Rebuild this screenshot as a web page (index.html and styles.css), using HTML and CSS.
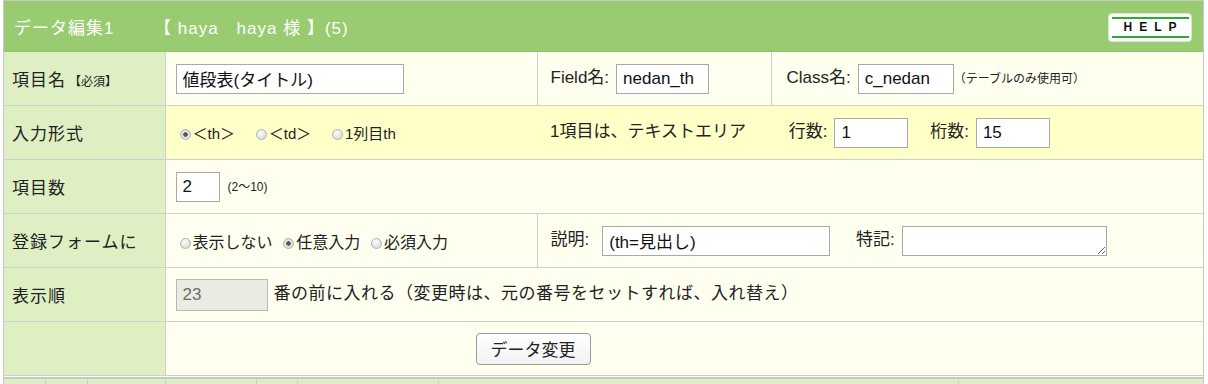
FILE: index.html
```html
<!DOCTYPE html>
<html>
  <head>
    <title>データ編集1</title>
    <link rel="stylesheet" href="styles.css">
  </head>
  <body>
    <div class="wrap">
      <div class="head">
        <span class="head-title">データ編集1</span>
        <span class="head-user">【 haya　haya 様 】(5)</span>
        <a class="help" href="#"><span>HELP</span></a>
      </div>
      <table class="edit">
        <colgroup>
          <col class="c-label">
          <col class="c-main">
          <col class="c-field">
          <col>
        </colgroup>
        <tr>
          <th>項目名<small>【必須】</small></th>
          <td><input type="text" class="w-title" value="値段表(タイトル)"></td>
          <td class="pad">Field名:<input type="text" class="w-field" value="nedan_th"></td>
          <td class="pad pad-r">Class名:<input type="text" class="w-class" value="c_nedan"><small>（テーブルのみ使用可）</small></td>
        </tr>
        <tr class="yellow">
          <th>入力形式</th>
          <td class="noright">
            <label class="opt"><input type="radio" name="kind" checked>＜th＞</label>
            <label class="opt"><input type="radio" name="kind">＜td＞</label>
            <label class="opt"><input type="radio" name="kind">1列目th</label>
          </td>
          <td class="pad noleft" colspan="2">
            <span class="gap-text">1項目は、テキストエリア</span>
            <span class="gap-num">行数:<input type="text" class="w-num" value="1"></span>
            <span>桁数:<input type="text" class="w-num" value="15"></span>
          </td>
        </tr>
        <tr>
          <th>項目数</th>
          <td colspan="3"><input type="text" class="w-count" value="2"><small>(2～10)</small></td>
        </tr>
        <tr>
          <th>登録フォームに</th>
          <td>
            <label class="opt tight"><input type="radio" name="show">表示しない</label>
            <label class="opt tight"><input type="radio" name="show" checked>任意入力</label>
            <label class="opt tight"><input type="radio" name="show">必須入力</label>
          </td>
          <td class="pad" colspan="2">
            <span class="gap-desc">説明:<input type="text" class="w-desc" value="(th=見出し)"></span>
            <span>特記:<textarea class="w-note"></textarea></span>
          </td>
        </tr>
        <tr>
          <th>表示順</th>
          <td colspan="3" class="order-text"><input type="text" class="w-order" value="23" disabled>番の前に入れる（変更時は、元の番号をセットすれば、入れ替え）</td>
        </tr>
        <tr>
          <th></th>
          <td colspan="3" class="submit-cell"><button type="button">データ変更</button></td>
        </tr>
      </table>
      <table class="next">
        <tr>
          <td class="n1"></td><td class="n2"></td><td class="n3"></td><td class="n4"></td>
          <td class="n5"></td><td class="n6"></td><td class="n7"></td><td></td>
        </tr>
      </table>
    </div>
  </body>
</html>
```

FILE: styles.css
```css
body {
  margin: 0;
  font-family: "Liberation Sans", "Noto Sans CJK JP", sans-serif;
  font-size: 17px;
  color: #222;
  background: #fff;
}

.wrap {
  margin: 0 4px 0 3px;
  border-left: 1px solid #c8c8c8;
  border-right: 1px solid #c8c8c8;
  border-top: 1px solid #c8c8c8;
  height: 384px;
  overflow: hidden;
}

.head {
  display: flex;
  align-items: center;
  height: 50px;
  background-color: #99cc70;
  color: #fff;
  padding: 0 10px;
  border-bottom: 1px solid #8fc566;
  letter-spacing: 1px;
}

.head-title {
  width: 140px;
  font-size: 17px;
}

.head-user {
  font-size: 17px;
  flex: 1;
}

.help {
  display: flex;
  align-items: center;
  justify-content: center;
  width: 82px;
  height: 27px;
  background: #fff;
  border: 1px solid #d8e8cc;
  border-radius: 4px;
  margin-right: 1px;
  margin-top: 2px;
  text-decoration: none;
}

.help span {
  display: block;
  width: 77px;
  height: 17px;
  line-height: 17px;
  border-top: 2px solid #2eaa3a;
  border-bottom: 2px solid #2eaa3a;
  color: #111;
  font-size: 12px;
  font-weight: bold;
  letter-spacing: 7px;
  text-align: center;
  text-indent: 7px;
}

table {
  width: 100%;
  border-collapse: collapse;
}

.c-label { width: 161px; }
.c-main { width: 372px; }
.c-field { width: 234px; }

.edit th,
.edit td {
  height: 53px;
  border: 1px solid #cfcfcf;
  padding: 0 10px;
  text-align: left;
  white-space: nowrap;
}

.edit tr:first-child th,
.edit tr:first-child td {
  border-top: none;
}

.edit th:first-child,
.next td:first-child {
  border-left: none;
}

.edit td:last-child,
.next td:last-child {
  border-right: none;
}

.edit th {
  background-color: #dfefc4;
  font-weight: normal;
  padding-left: 8px;
  letter-spacing: 1px;
}

.edit td {
  background-color: #fffff0;
}

.edit .yellow td {
  background-color: #ffffc8;
}

.edit td.pad {
  padding-left: 13px;
}

.edit td.pad-r {
  padding-left: 15px;
}

.edit td.noleft {
  border-left: none;
}

.edit td.noright {
  border-right: none;
}

.edit td.order-text {
  letter-spacing: 0.5px;
}

.edit small {
  font-size: 12px;
  letter-spacing: 0;
}

.edit th small {
  font-size: 12px;
  margin-left: 3px;
}

.gap-text {
  margin-right: 38px;
}

.gap-num {
  margin-right: 14px;
}

.gap-desc {
  margin-right: 18px;
}

input[type="text"],
textarea {
  box-sizing: border-box;
  height: 30px;
  border: 1px solid #a9a9a9;
  background: #fff;
  font-family: "Liberation Sans", "Noto Sans CJK JP", sans-serif;
  font-size: 17px;
  letter-spacing: 0;
  color: #111;
  padding: 0 6px;
  vertical-align: middle;
  margin: 0 3px 0 7px;
}

textarea {
  resize: both;
  padding-top: 4px;
}

.w-title { width: 228px; margin-left: 0 !important; }
.w-field { width: 93px; }
.w-class { width: 96px; margin-right: 0 !important; }
.w-num { width: 74px; }
.w-count { width: 44px; margin-left: 0 !important; margin-right: 8px !important; }
.w-desc { width: 228px; margin-left: 13px !important; }
.w-note { width: 205px; }
.w-order {
  width: 92px;
  height: 32px !important;
  margin-left: 0 !important;
  margin-right: 6px !important;
  background: #ebebe4 !important;
  color: #6d6d6d !important;
  border-color: #b9b9b9 !important;
}

.opt {
  margin-right: 12px;
  font-size: 15px;
}

.opt.tight {
  margin-right: 2px;
  font-size: 16px;
}

.opt input {
  appearance: none;
  -webkit-appearance: none;
  width: 11px;
  height: 11px;
  margin: 0 2px 0 4px;
  border-radius: 50%;
  border: 1px solid #b4b4b4;
  background: radial-gradient(circle at 40% 35%, #fdfdfd, #d2d2d2);
  vertical-align: -1px;
}

.opt input:checked {
  background: radial-gradient(circle, #555 0 2px, #e9e9e9 2.5px, #cfcfcf);
}

.submit-cell {
  padding-left: 310px !important;
}

button {
  width: 115px;
  height: 32px;
  font-family: "Liberation Sans", "Noto Sans CJK JP", sans-serif;
  font-size: 17px;
  color: #222;
  background: linear-gradient(#fff, #f2f2f2);
  border: 1px solid #9a9a9a;
  border-radius: 4px;
}

.next {
  border-top: 2px solid #c8c8c8;
  margin-top: 1px;
}

.next td {
  height: 20px;
  background-color: #dfefc4;
  border: 1px solid #cfcfcf;
  border-top: none;
  padding: 0;
}

.n1 { width: 41px; }
.n2 { width: 41px; }
.n3 { width: 77px; }
.n4 { width: 90px; }
.n5 { width: 40px; }
.n6 { width: 140px; }
.n7 { width: 519px; }
```
